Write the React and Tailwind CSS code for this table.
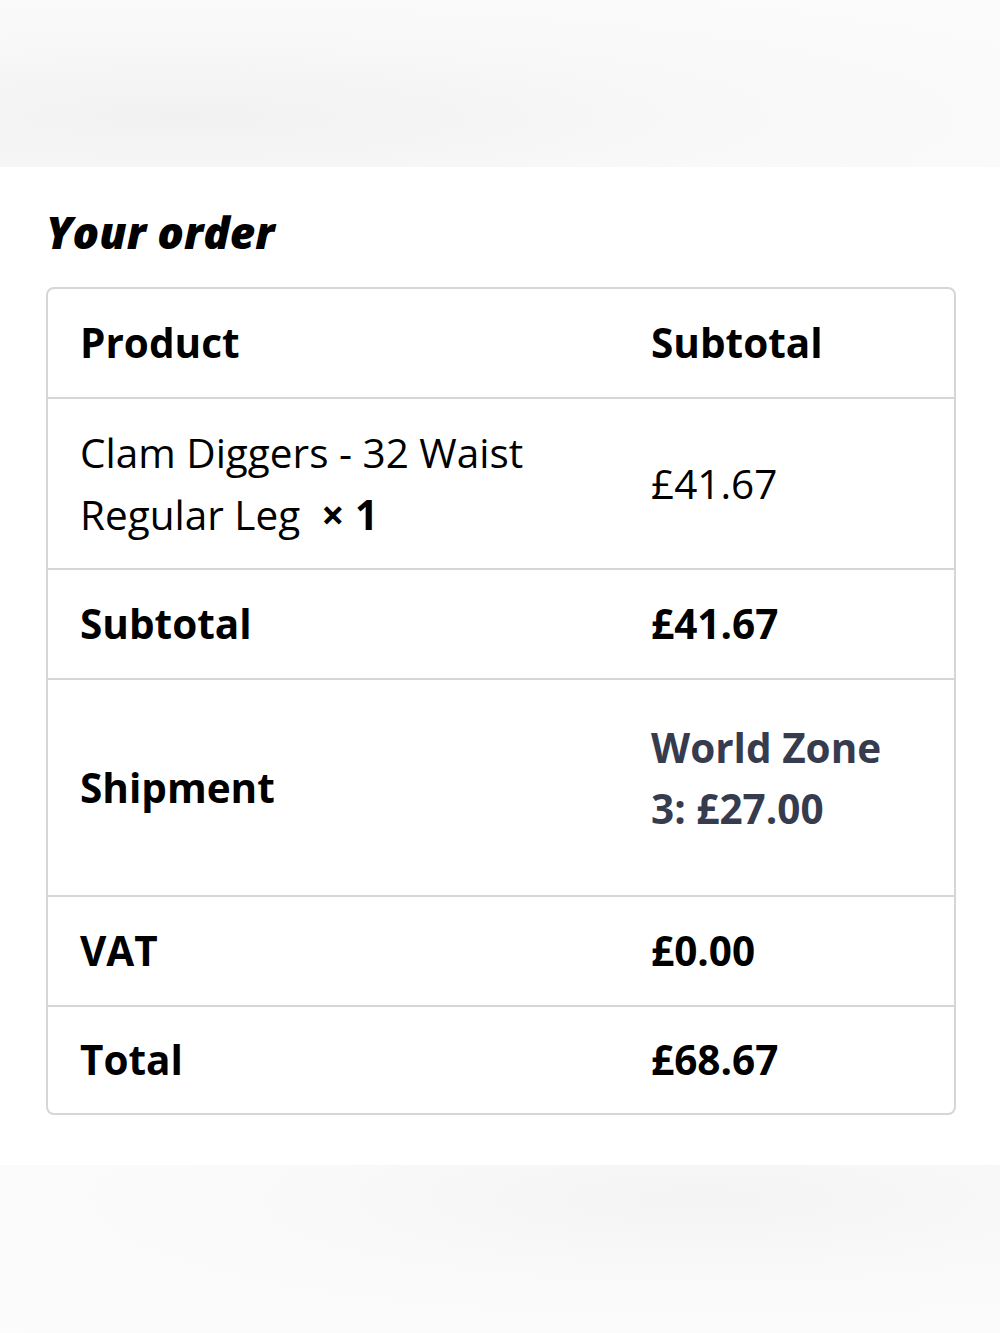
export default function App() {
  const font = { fontFamily: '"Open Sans", "Noto Sans", sans-serif' };
  return (
    <div className="w-[1000px] h-[1333px] flex flex-col bg-white text-black" style={font}>
      <div className="h-[167px] bg-[radial-gradient(ellipse_at_18%_70%,#f1f1f1_0%,#f8f8f8_45%,#fbfbfb_100%)]" />
      <div className="h-[998px] bg-white pl-[46px] pr-[44px] pt-[40px]">
        <h2 className="text-[44px] leading-[50px] font-extrabold italic tracking-[0px] text-black">
          Your order
        </h2>
        <div className="mt-[30px] border-2 border-[#d6d6d6] rounded-[8px] overflow-hidden">
          <Row h="h-[108px]" left={<span className="font-bold">Product</span>} right={<span className="font-bold">Subtotal</span>} />
          <Row
            h="h-[171px]"
            left={
              <span className="font-normal">
                Clam Diggers - 32 Waist
                <br />
                Regular Leg&nbsp; <strong className="font-bold">× 1</strong>
              </span>
            }
            right={<span className="font-normal">£41.67</span>}
          />
          <Row h="h-[110px]" left={<span className="font-bold">Subtotal</span>} right={<span className="font-bold">£41.67</span>} />
          <div className="grid grid-cols-[571px_1fr] h-[217px] border-t-2 border-[#d6d6d6]">
            <div className="pl-[32px] flex items-center text-[40.5px] leading-[62px] font-bold">Shipment</div>
            <div className="pl-[32px] pr-[32px] pt-[37px] text-[40.5px] leading-[61px] font-bold text-[#363b4d]">
              World Zone
              <br />
              3: £27.00
            </div>
          </div>
          <Row h="h-[110px]" left={<span className="font-bold">VAT</span>} right={<span className="font-bold">£0.00</span>} />
          <Row h="h-[108px]" left={<span className="font-bold">Total</span>} right={<span className="font-bold">£68.67</span>} />
        </div>
      </div>
      <div className="flex-1 bg-[radial-gradient(ellipse_at_70%_20%,#f4f4f4_0%,#f9f9f9_40%,#fcfcfc_100%)]" />
    </div>
  );
}

function Row({ h, left, right }) {
  return (
    <div className={`grid grid-cols-[571px_1fr] ${h} border-t-2 border-[#d6d6d6] first:border-t-0`}>
      <div className="pl-[32px] flex items-center text-[40.5px] leading-[62px]">{left}</div>
      <div className="pl-[32px] flex items-center text-[40.5px] leading-[62px]">{right}</div>
    </div>
  );
}
